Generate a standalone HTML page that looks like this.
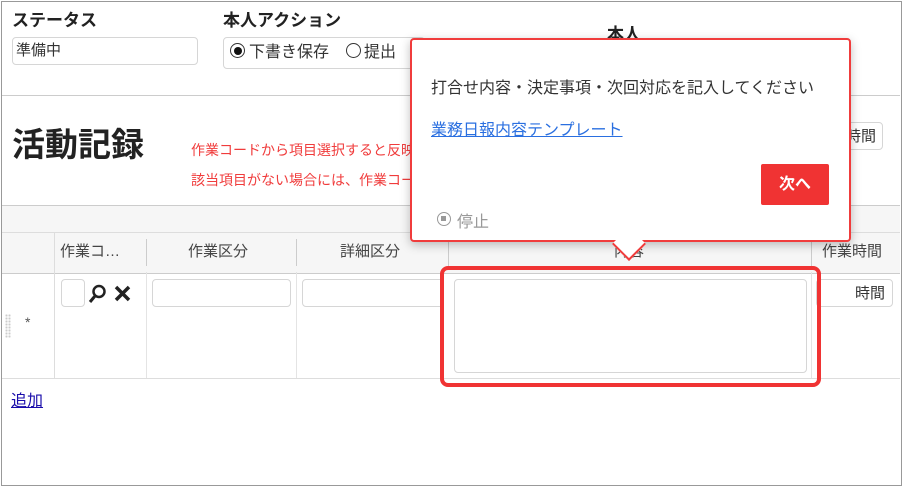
<!DOCTYPE html>
<html><head><meta charset="utf-8"><style>
body{margin:0;width:903px;height:486px;overflow:hidden;background:#fff;font-family:"Liberation Sans","Noto Sans CJK JP",sans-serif;color:#333;position:relative}
.a{position:absolute}
.frame{left:1px;top:1px;width:899px;height:483px;border:1px solid #999}
.inp{border:1px solid #d6d6d6;border-radius:4px;background:#fff}
.th{font-size:15px;color:#444;top:240px}
</style></head><body>
<div class="a frame"></div>
<div class="a" style="left:12px;top:6px;font-size:17px;font-weight:bold;color:#222">ステータス</div>
<div class="a inp" style="left:12px;top:37px;width:184px;height:26px"></div>
<div class="a" style="left:16px;top:39px;font-size:15px;color:#333">準備中</div>
<div class="a" style="left:223px;top:6px;font-size:17px;font-weight:bold;color:#222">本人アクション</div>
<div class="a inp" style="left:223px;top:37px;width:200px;height:30px"></div>
<div class="a" style="left:230px;top:43px;width:13px;height:13px;border:1.5px solid #333;border-radius:50%"></div>
<div class="a" style="left:234px;top:47px;width:8px;height:8px;background:#111;border-radius:50%"></div>
<div class="a" style="left:249px;top:38px;font-size:16px">下書き保存</div>
<div class="a" style="left:346px;top:43px;width:13px;height:13px;border:1.5px solid #333;border-radius:50%"></div>
<div class="a" style="left:364px;top:38px;font-size:16px">提出</div>
<div class="a" style="left:607px;top:20px;font-size:17px;font-weight:bold;color:#222">本人</div>
<div class="a" style="left:2px;top:95px;width:898px;height:1px;background:#ccc"></div>
<div class="a" style="left:12px;top:118px;font-size:33px;font-weight:bold;color:#222">活動記録</div>
<div class="a" style="left:191px;top:140px;font-size:14px;color:#f03c3c">作業コードから項目選択すると反映</div>
<div class="a" style="left:191px;top:170px;font-size:14px;color:#f03c3c">該当項目がない場合には、作業コード</div>
<div class="a inp" style="left:820px;top:122px;width:61px;height:26px"></div>
<div class="a" style="left:846px;top:125px;font-size:15px">時間</div>
<div class="a" style="left:2px;top:205px;width:898px;height:67px;background:#f6f6f6;border-top:1px solid #ccc;border-bottom:1px solid #ccc"></div>
<div class="a" style="left:2px;top:232px;width:898px;height:1px;background:#ddd"></div>
<div class="a" style="left:54px;top:232px;width:1px;height:147px;background:#ddd"></div>
<div class="a" style="left:146px;top:239px;width:1px;height:27px;background:#ccc"></div>
<div class="a" style="left:296px;top:239px;width:1px;height:27px;background:#ccc"></div>
<div class="a" style="left:448px;top:239px;width:1px;height:27px;background:#ccc"></div>
<div class="a" style="left:811px;top:239px;width:1px;height:27px;background:#ccc"></div>
<div class="a" style="left:146px;top:272px;width:1px;height:107px;background:#e4e4e4"></div>
<div class="a" style="left:296px;top:272px;width:1px;height:107px;background:#e4e4e4"></div>
<div class="a" style="left:811px;top:272px;width:1px;height:107px;background:#e4e4e4"></div>
<div class="a" style="left:2px;top:378px;width:898px;height:1px;background:#ddd"></div>
<div class="a th" style="left:60px">作業コ…</div>
<div class="a th" style="left:188px">作業区分</div>
<div class="a th" style="left:340px">詳細区分</div>
<div class="a th" style="left:614px">内容</div>
<div class="a th" style="left:822px">作業時間</div>
<div class="a" style="left:5px;top:314px;width:6px;height:24px;background-image:radial-gradient(#ccc 1px,transparent 1.2px);background-size:3px 3px"></div>
<div class="a" style="left:25px;top:314px;font-size:14px;color:#555">*</div>
<div class="a inp" style="left:61px;top:279px;width:22px;height:26px"></div>
<svg class="a" style="left:88px;top:284px" width="22" height="20"><circle cx="11" cy="7.5" r="5.5" fill="none" stroke="#222" stroke-width="2.5"/><line x1="7" y1="12" x2="2" y2="18" stroke="#222" stroke-width="3"/></svg>
<svg class="a" style="left:113px;top:285px" width="20" height="18"><path d="M3 2L16 15M16 2L3 15" stroke="#222" stroke-width="3.5"/></svg>
<div class="a inp" style="left:152px;top:279px;width:137px;height:26px"></div>
<div class="a inp" style="left:302px;top:279px;width:140px;height:26px"></div>
<div class="a inp" style="left:816px;top:279px;width:75px;height:26px"></div>
<div class="a" style="left:855px;top:282px;font-size:15px">時間</div>
<div class="a inp" style="left:454px;top:279px;width:351px;height:92px"></div>
<div class="a" style="left:440px;top:266px;width:373px;height:113px;border:4px solid #f03333;border-radius:8px"></div>
<div class="a" style="left:11px;top:387px;font-size:16px;color:#1a0dab;text-decoration:underline">追加</div>
<div class="a" style="left:410px;top:38px;width:437px;height:200px;background:#fff;border:2px solid #f03c3c;border-radius:4px;box-shadow:0 3px 10px rgba(0,0,0,.25)"></div>
<div class="a" style="left:617px;top:232px;width:22px;height:22px;background:#fff;border-right:2px solid #f03c3c;border-bottom:2px solid #f03c3c;transform:rotate(45deg)"></div>
<div class="a" style="left:431px;top:74px;font-size:16px;color:#333">打合せ内容・決定事項・次回対応を記入してください</div>
<div class="a" style="left:431px;top:116px;font-size:16px;color:#2a6fe0;text-decoration:underline">業務日報内容テンプレート</div>
<div class="a" style="left:761px;top:164px;width:68px;height:41px;background:#f03333;border-radius:2px;color:#fff;font-size:16px;font-weight:bold;text-align:center;line-height:41px">次へ</div>
<div class="a" style="left:437px;top:212px;width:12px;height:12px;border:1.5px solid #999;border-radius:50%"></div>
<div class="a" style="left:441px;top:216px;width:5px;height:5px;background:#999"></div>
<div class="a" style="left:457px;top:208px;font-size:16px;color:#999">停止</div>
</body></html>
